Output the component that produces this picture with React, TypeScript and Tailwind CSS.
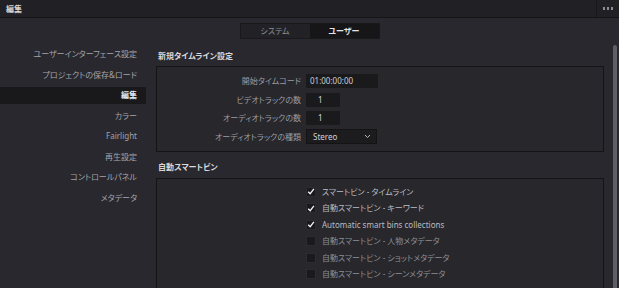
const sidebar = [
  "ユーザーインターフェース設定",
  "プロジェクトの保存&ロード",
  "編集",
  "カラー",
  "Fairlight",
  "再生設定",
  "コントロールパネル",
  "メタデータ",
];

const timelineRows = [
  { label: "開始タイムコード", kind: "tc", value: "01:00:00:00" },
  { label: "ビデオトラックの数", kind: "num", value: "1" },
  { label: "オーディオトラックの数", kind: "num", value: "1" },
  { label: "オーディオトラックの種類", kind: "select", value: "Stereo" },
];

const smartBins = [
  { label: "スマートビン - タイムライン", checked: true },
  { label: "自動スマートビン - キーワード", checked: true },
  { label: "Automatic smart bins collections", checked: true },
  { label: "自動スマートビン - 人物メタデータ", checked: false },
  { label: "自動スマートビン - ショットメタデータ", checked: false },
  { label: "自動スマートビン - シーンメタデータ", checked: false },
];

const font = { fontFamily: '"Noto Sans", "Noto Sans CJK JP", sans-serif' };

function Check({ on }: { on: boolean }) {
  return (
    <div className="w-[10px] h-[10px] bg-[#1a1a1c] border border-[#2c2c30] flex items-center justify-center">
      {on && (
        <svg width="9" height="9" viewBox="0 0 10 10">
          <path d="M1.5 5.2 L4 7.8 L8.6 1.8" fill="none" stroke="#f2f2f2" strokeWidth="1.7" />
        </svg>
      )}
    </div>
  );
}

export default function App() {
  return (
    <div
      className="w-[619px] h-[288px] bg-[#28282e] overflow-hidden flex flex-col text-[8px] leading-none [font-feature-settings:'palt']"
      style={font}
    >
      {/* title bar */}
      <div className="h-[18px] shrink-0 bg-[#202025] border-b border-[#151517] flex items-center">
        <span className="pl-[6px] text-[#d6d6da] font-bold flex-1">編集</span>
        <div className="h-full w-[23px] border-l border-[#18181a] flex items-center justify-center gap-[1.5px]">
          <span className="w-[2.5px] h-[2.5px] bg-[#8c8c92]" />
          <span className="w-[2.5px] h-[2.5px] bg-[#8c8c92]" />
          <span className="w-[2.5px] h-[2.5px] bg-[#8c8c92]" />
        </div>
      </div>

      {/* tabs */}
      <div className="flex justify-center mt-[5px] shrink-0">
        <div className="flex h-[16px] border border-[#19191b]">
          <div className="w-[69px] flex items-center justify-center bg-[#222226] text-[#8e8e94]">システム</div>
          <div className="w-[69px] flex items-center justify-center bg-[#161618] text-[#e4e4e8] font-bold">ユーザー</div>
        </div>
      </div>

      <div className="flex flex-1 min-h-0">
        {/* sidebar */}
        <div className="w-[146px] shrink-0 pt-[6.5px] flex flex-col gap-[3.5px]">
          {sidebar.map((s, i) => (
            <div
              key={s}
              className={
                "h-[17px] flex items-center justify-end pr-[9px] " +
                (i === 2 ? "bg-[#19191c] text-[#e8e8ec] font-bold" : "text-[#a4a4aa]")
              }
            >
              {s}
            </div>
          ))}
        </div>

        {/* content */}
        <div className="flex-1 pl-[10px] pr-[9px] pt-[12px]">
          <div className="pl-[2px] text-[#d8d8dc] font-bold h-[10px] flex items-center">新規タイムライン設定</div>
          <div className="mt-[5px] h-[86px] border border-[#141416] bg-[#27272c] pt-[7px] flex flex-col gap-[4.5px]">
            {timelineRows.map((r) => (
              <div key={r.label} className="flex items-center h-[14px]">
                <div className="w-[144px] text-right text-[#9c9ca2]">{r.label}</div>
                <div className="ml-[5px]">
                  {r.kind === "tc" && (
                    <div className="w-[72px] h-[14px] bg-[#1a1a1d] flex items-center pl-[4px] text-[#cfcfd3]">{r.value}</div>
                  )}
                  {r.kind === "num" && (
                    <div className="w-[34px] h-[14px] bg-[#1a1a1d] flex items-center pl-[12px] text-[#d8d8dc]">{r.value}</div>
                  )}
                  {r.kind === "select" && (
                    <div className="w-[71px] h-[15px] bg-[#1c1c1f] border border-[#141416] flex items-center pl-[6px] pr-[5px] text-[#d0d0d4]">
                      <span className="flex-1">{r.value}</span>
                      <svg width="7" height="5" viewBox="0 0 7 5">
                        <path d="M1 1 L3.5 3.6 L6 1" fill="none" stroke="#b8b8bc" strokeWidth="1" />
                      </svg>
                    </div>
                  )}
                </div>
              </div>
            ))}
          </div>

          <div className="mt-[10px] pl-[2px] text-[#d8d8dc] font-bold h-[10px] flex items-center">自動スマートビン</div>
          <div className="mt-[6px] h-[120px] border border-[#141416] bg-[#27272c] pt-[7px] pl-[149px] flex flex-col gap-[5.6px]">
            {smartBins.map((b) => (
              <div key={b.label} className="flex items-center gap-[6px] h-[11px]">
                <Check on={b.checked} />
                <span className={b.checked ? "text-[#bcbcc0]" : "text-[#8e8e94]"}>{b.label}</span>
              </div>
            ))}
          </div>
        </div>

        {/* scrollbar */}
        <div className="w-[6px] shrink-0 pt-[6px] pr-[2px]">
          <div className="w-[4px] h-full rounded-t-[2px] bg-[#5e5e64]" />
        </div>
      </div>
    </div>
  );
}
